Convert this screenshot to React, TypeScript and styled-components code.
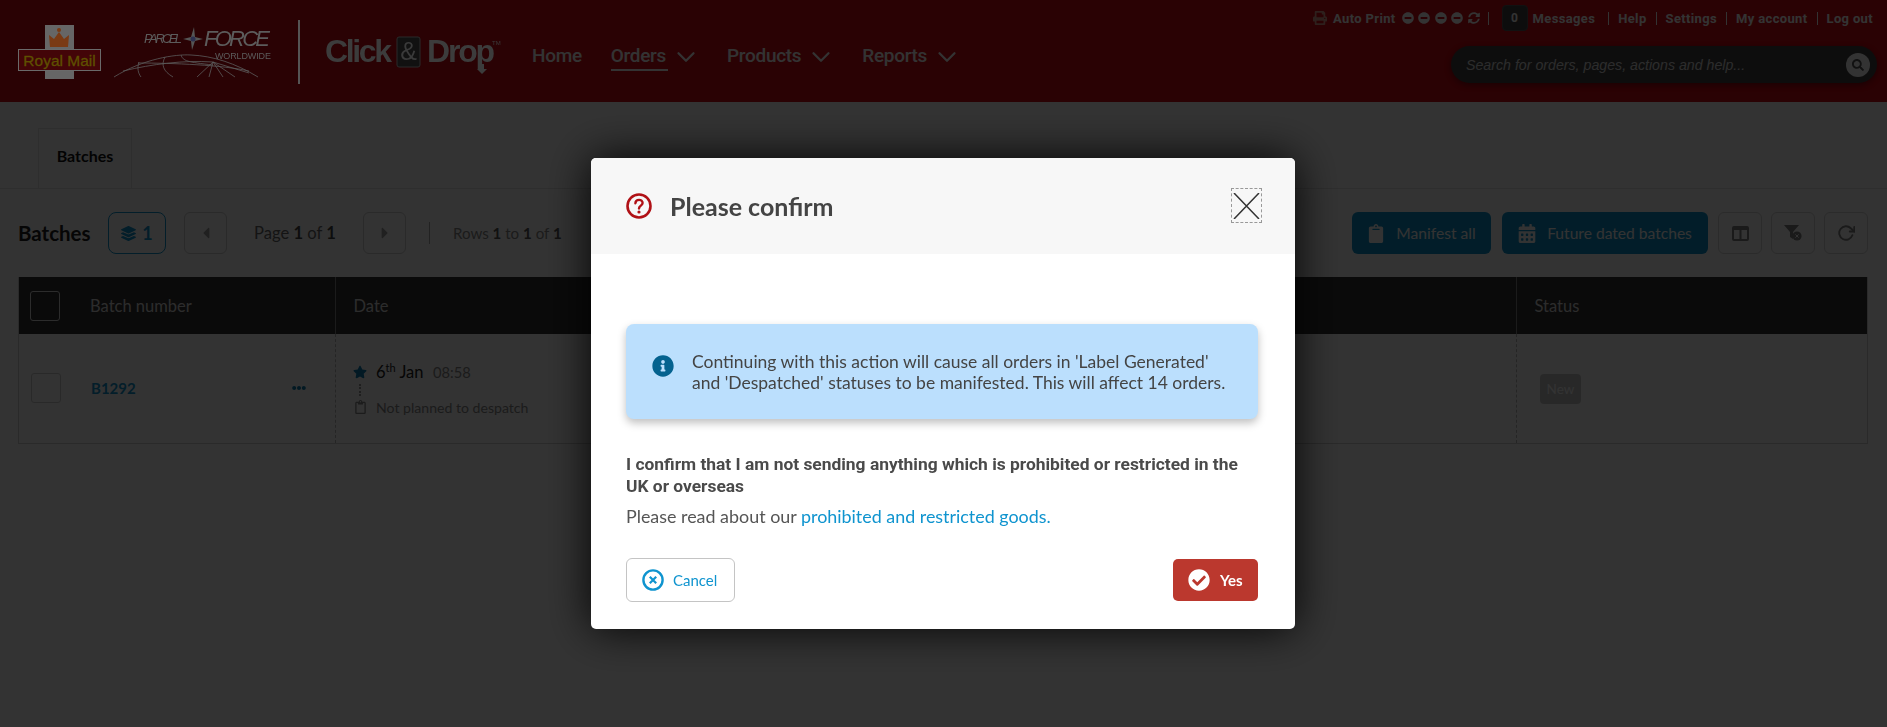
import styled, {createGlobalStyle} from 'styled-components'
import {
    FaPrint, FaMinusCircle, FaSyncAlt, FaSearch, FaLayerGroup, FaCaretLeft, FaCaretRight,
    FaClipboard, FaCalendarAlt, FaStar, FaRegClipboard, FaInfoCircle, FaCheckCircle, FaEllipsisH,
} from 'react-icons/fa'
import {FiChevronDown, FiRotateCw} from 'react-icons/fi'

const GlobalStyle = createGlobalStyle`
    html, body {
        margin: 0;
        padding: 0;
        background: #ffffff;
    }
    body {
        font-family: "Lato", "Noto Sans", sans-serif;
        color: #333333;
        height: 727px;
        overflow: hidden;
    }
`

function RoyalMailLogo() {
    return (
        <svg width="105" height="56" viewBox="0 0 105 56">
            <rect x="45" y="0" width="29" height="54" fill="#666666"/>
            <path d="M50 22 L49 10 L54 14 L59 7 L64 14 L69 10 L68 22 Z" fill="#7a3a14"/>
            <circle cx="59" cy="5" r="2" fill="#7a3a14"/>
            <rect x="18.5" y="24.5" width="82" height="21" fill="#430508" stroke="#6a6a6a"/>
            <text x="59.5" y="41" textAnchor="middle" fontFamily="Liberation Sans" fontSize="15.5" fill="#5f5000" stroke="#5f5000" strokeWidth="0.3">Royal Mail</text>
        </svg>
    )
}

function ParcelforceLogo() {
    return (
        <svg width="160" height="64" viewBox="0 0 160 64" fill="none" stroke="#5c5c5c" strokeWidth="0.8">
            <text x="31" y="18" fontFamily="Liberation Sans" fontStyle="italic" fontSize="13" fill="#5c5c5c" stroke="none" textLength="38">PARCEL</text>
            <path d="M70 14 L78 12 L81 2 L82 12 L90 14 L82 16 L79 25 L78 16 Z" fill="#555555" stroke="none"/>
            <circle cx="80" cy="14" r="2.5" fill="#2c3050" stroke="none"/>
            <text x="91" y="21" fontFamily="Liberation Sans" fontStyle="italic" fontSize="22" fill="#5c5c5c" stroke="none" textLength="66">FORCE</text>
            <text x="102" y="34" fontFamily="Liberation Sans" fontSize="9" fill="#5c5c5c" stroke="none" textLength="56">WORLDWIDE</text>
            <path d="M1 52 C30 34 62 29 78 30 C100 31 122 38 145 52"/>
            <path d="M25 38 C60 38 110 40 136 46"/>
            <path d="M10 46 C40 39 70 35 100 37"/>
            <path d="M26 37 C24 43 25 48 28 52"/>
            <path d="M52 32 C48 40 50 46 60 52"/>
            <path d="M68 30 C70 36 74 37 100 40"/>
            <path d="M100 37 L84 52 M100 37 L96 52 M100 37 L110 52 M100 37 L122 52 M100 37 L136 48"/>
        </svg>
    )
}

function ClickDropLogo() {
    return (
        <svg width="180" height="50" viewBox="0 0 180 50">
            <text x="0" y="34" fontFamily="Liberation Sans" fontWeight="700" fontSize="32" fill="#3c3c3c" textLength="67">Click</text>
            <rect x="72" y="9" width="23" height="30" rx="2" fill="#111111" stroke="#2a2a2a"/>
            <text x="83.5" y="32" textAnchor="middle" fontFamily="Liberation Sans" fontSize="25" fill="#3a3a3a">&amp;</text>
            <text x="102" y="34" fontFamily="Liberation Sans" fontWeight="700" fontSize="32" fill="#3c3c3c" textLength="68">Drop</text>
            <path d="M155 36 H159 V41 H162 L157 46 L152 41 H155 Z" fill="#3c3c3c"/>
            <text x="167" y="17" fontFamily="Liberation Sans" fontSize="6" fill="#3c3c3c">TM</text>
        </svg>
    )
}

function QuestionIcon() {
    return (
        <svg width="26" height="26" viewBox="0 0 26 26" fill="none">
            <circle cx="13" cy="13" r="11.5" stroke="#b01116" strokeWidth="2.6"/>
            <path d="M9.4 10.2 C9.6 5.8 16.6 5.8 16.6 10 C16.6 12.6 13 12.6 13 15.4" stroke="#b01116" strokeWidth="2.4" strokeLinecap="round"/>
            <circle cx="13" cy="19" r="1.6" fill="#b01116"/>
        </svg>
    )
}

function CancelIcon() {
    return (
        <svg width="22" height="22" viewBox="0 0 22 22" fill="none" stroke="#0f94cf">
            <circle cx="11" cy="11" r="9.6" strokeWidth="2.4"/>
            <path d="M7.8 7.8 L14.2 14.2 M14.2 7.8 L7.8 14.2" strokeWidth="2.2"/>
        </svg>
    )
}

function FilterClearIcon() {
    return (
        <svg width="18" height="16" viewBox="0 0 18 16">
            <path d="M0 0 H15 L9 7 V14 L6 12 V7 Z" fill="#808080"/>
            <circle cx="13" cy="11" r="4.6" fill="#808080"/>
            <path d="M11.4 9.4 L14.6 12.6 M14.6 9.4 L11.4 12.6" stroke="#ffffff" strokeWidth="1"/>
        </svg>
    )
}

function ColumnsIcon() {
    return (
        <svg width="17" height="15" viewBox="0 0 17 15">
            <path d="M2 0 H15 A2 2 0 0 1 17 2 V13 A2 2 0 0 1 15 15 H2 A2 2 0 0 1 0 13 V2 A2 2 0 0 1 2 0 Z M2 4 V13 H7.5 V4 Z M9.5 4 V13 H15 V4 Z" fill="#808080" fillRule="evenodd"/>
        </svg>
    )
}

function App() {
    return (
        <>
            <GlobalStyle/>
            <Header>
                <Brand>
                    <RoyalMailLogo/>
                    <ParcelforceLogo/>
                    <BrandDivider/>
                    <ClickDropLogo/>
                </Brand>

                <Nav>
                    <NavItem>Home</NavItem>
                    <NavItem $active>Orders<FiChevronDown/></NavItem>
                    <NavItem>Products<FiChevronDown/></NavItem>
                    <NavItem>Reports<FiChevronDown/></NavItem>
                </Nav>

                <HeaderRight>
                    <UtilityBar>
                        <AutoPrint>
                            <FaPrint/>
                            <span>Auto Print</span>
                            <AutoPrintIcons>
                                <FaMinusCircle/>
                                <FaMinusCircle/>
                                <FaMinusCircle/>
                                <FaMinusCircle/>
                                <FaSyncAlt/>
                            </AutoPrintIcons>
                        </AutoPrint>
                        <MessageCount>0</MessageCount>
                        <UtilityLink>Messages</UtilityLink>
                        <UtilityLink $divided>Help</UtilityLink>
                        <UtilityLink $divided>Settings</UtilityLink>
                        <UtilityLink $divided>My account</UtilityLink>
                        <UtilityLink $divided>Log out</UtilityLink>
                    </UtilityBar>
                    <SearchBox>
                        <SearchText>Search for orders, pages, actions and help...</SearchText>
                        <SearchButton><FaSearch/></SearchButton>
                    </SearchBox>
                </HeaderRight>
            </Header>

            <Tabs>
                <Tab>Batches</Tab>
            </Tabs>

            <Content>
                <Toolbar>
                    <ToolbarTitle>Batches</ToolbarTitle>
                    <CountBadge><FaLayerGroup/>1</CountBadge>
                    <PageButton><FaCaretLeft/></PageButton>
                    <PageInfo>Page <b>1</b> of <b>1</b></PageInfo>
                    <PageButton><FaCaretRight/></PageButton>
                    <RowsInfo>Rows <b>1</b> to <b>1</b> of <b>1</b></RowsInfo>

                    <ToolbarActions>
                        <ActionButton><FaClipboard/>Manifest all</ActionButton>
                        <ActionButton $wide><FaCalendarAlt/>Future dated batches</ActionButton>
                        <IconButton><ColumnsIcon/></IconButton>
                        <IconButton><FilterClearIcon/></IconButton>
                        <IconButton><FiRotateCw/></IconButton>
                    </ToolbarActions>
                </Toolbar>

                <Table>
                    <HeaderCell>
                        <HeaderCheck/>
                        Batch number
                    </HeaderCell>
                    <HeaderCell $divided>Date</HeaderCell>
                    <HeaderCell $divided>Status</HeaderCell>

                    <BatchCell>
                        <RowCheck/>
                        <BatchLink>B1292</BatchLink>
                        <RowMenu><FaEllipsisH/></RowMenu>
                    </BatchCell>
                    <DateCell>
                        <DateLine>
                            <StarIcon><FaStar/></StarIcon>
                            <DateText>6<sup>th</sup> Jan</DateText>
                            <TimeText>08:58</TimeText>
                        </DateLine>
                        <DotLine/>
                        <DateLine>
                            <PlanIcon><FaRegClipboard/></PlanIcon>
                            <PlanText>Not planned to despatch</PlanText>
                        </DateLine>
                    </DateCell>
                    <StatusCell>
                        <StatusTag>New</StatusTag>
                    </StatusCell>
                </Table>
            </Content>

            <Overlay/>

            <ModalWrap>
                <Modal>
                    <ModalHeader>
                        <QuestionIcon/>
                        <ModalTitle>Please confirm</ModalTitle>
                        <CloseButton>
                            <svg width="27" height="26" viewBox="0 0 27 26" fill="none" stroke="#333333" strokeWidth="1.5">
                                <path d="M1 0 L26 26 M26 0 L1 26"/>
                            </svg>
                        </CloseButton>
                    </ModalHeader>

                    <ModalBody>
                        <Alert>
                            <AlertIcon><FaInfoCircle/></AlertIcon>
                            <AlertText>
                                Continuing with this action will cause all orders in 'Label Generated'
                                <br/>
                                and 'Despatched' statuses to be manifested. This will affect 14 orders.
                            </AlertText>
                        </Alert>

                        <ConfirmText>
                            I confirm that I am not sending anything which is prohibited or restricted in the UK or overseas
                        </ConfirmText>
                        <ReadText>
                            Please read about our <GoodsLink>prohibited and restricted goods.</GoodsLink>
                        </ReadText>

                        <ModalActions>
                            <CancelButton><CancelIcon/>Cancel</CancelButton>
                            <YesButton><FaCheckCircle/>Yes</YesButton>
                        </ModalActions>
                    </ModalBody>
                </Modal>
            </ModalWrap>
        </>
    )
}

export default App

const Header = styled.header`
    height: 102px;
    background-color: #d20a14;
    display: flex;
    box-sizing: border-box;
`

const Brand = styled.div`
    position: relative;
    z-index: 12;
    display: flex;
    align-items: flex-start;
    width: 532px;
    flex: none;
    padding-top: 25px;
    box-sizing: border-box;

    & > svg {
        flex: none;
    }
    & > svg:nth-of-type(2) {
        margin-left: 8px;
    }
    & > svg:nth-of-type(3) {
        margin-left: 25px;
        margin-top: 3px;
    }
`

const BrandDivider = styled.div`
    width: 2px;
    height: 64px;
    margin-left: 25px;
    margin-top: -5px;
    background: #555555;
    flex: none;
`

const Nav = styled.nav`
    display: flex;
    gap: 26px;
    padding-top: 43px;
    font-family: "Roboto", sans-serif;
    font-size: 19px;
    font-weight: 500;
    letter-spacing: -0.3px;
    color: #ffffff;
`

const NavItem = styled.div<{$active?: boolean}>`
    position: relative;
    height: 27px;
    line-height: 26px;
    display: flex;
    gap: 5px;
    white-space: nowrap;

    &:first-child {
        margin-right: 3px;
    }

    ${props => props.$active && `
        &::after {
            content: "";
            position: absolute;
            left: 0;
            width: 57px;
            bottom: -1px;
            height: 2px;
            background: #ffffff;
        }
    `}

    svg {
        width: 30px;
        height: 30px;
        stroke-width: 1.8;
        margin-top: -1px;
    }
`

const HeaderRight = styled.div`
    margin-left: auto;
    padding-right: 10px;
    display: flex;
    flex-direction: column;
    align-items: flex-end;
`

const UtilityBar = styled.div`
    height: 46px;
    padding-top: 5px;
    padding-right: 4px;
    box-sizing: border-box;
    display: flex;
    font-family: "Roboto", sans-serif;
    font-size: 13px;
    font-weight: 700;
    letter-spacing: 0.35px;
    color: #ffffff;
    white-space: nowrap;
`

const AutoPrint = styled.div`
    height: 26px;
    display: flex;
    align-items: center;
    gap: 6px;
    padding-right: 9px;
    margin-right: 13px;
    position: relative;

    &::after {
        content: "";
        position: absolute;
        right: 0;
        top: 7px;
        height: 13px;
        width: 1px;
        background: #ffffff;
    }

    > svg {
        width: 14px;
        height: 14px;
        color: #e0a090;
    }
`

const AutoPrintIcons = styled.div`
    display: flex;
    align-items: center;
    gap: 4.5px;

    svg {
        width: 12px;
        height: 12px;
    }
`

const MessageCount = styled.div`
    width: 26px;
    height: 26px;
    box-sizing: border-box;
    border: 1px solid #555555;
    border-radius: 4px;
    background: #444444;
    font-size: 12px;
    line-height: 24px;
    text-align: center;
    margin-right: 5px;
`

const UtilityLink = styled.div<{$divided?: boolean}>`
    height: 26px;
    line-height: 28px;
    position: relative;
    margin-left: ${props => props.$divided ? '19px' : '0'};
    margin-right: ${props => props.$divided ? '0' : '4px'};

    ${props => props.$divided && `
        &::before {
            content: "";
            position: absolute;
            left: -10px;
            top: 7px;
            height: 13px;
            width: 1px;
            background: #ffffff;
        }
    `}
`

const SearchBox = styled.div`
    width: 426px;
    height: 37px;
    border-radius: 19px;
    background: #444444;
    box-shadow: 0 2px 6px rgba(0, 0, 0, 0.4);
    display: flex;
    align-items: center;
    padding: 0 7px 0 15px;
    box-sizing: border-box;
`

const SearchText = styled.div`
    font-family: "Liberation Sans", sans-serif;
    font-style: italic;
    font-size: 14.2px;
    color: #dddddd;
`

const SearchButton = styled.div`
    margin-left: auto;
    width: 24px;
    height: 24px;
    border-radius: 50%;
    background: #ffffff;
    color: #555555;
    display: grid;
    place-items: center;

    svg {
        width: 12px;
        height: 12px;
    }
`

const Tabs = styled.div`
    height: 87px;
    box-sizing: border-box;
    padding: 26px 0 0 38px;
    border-bottom: 1px solid #e4e4e4;
    display: flex;
`

const Tab = styled.div`
    width: 94px;
    height: 60px;
    box-sizing: border-box;
    border: 1px solid #e4e4e4;
    border-bottom: 0;
    font-size: 16px;
    font-weight: 700;
    color: #111111;
    text-align: center;
    line-height: 54px;
`

const Content = styled.main`
    padding: 23px 19px 0 18px;
`

const Toolbar = styled.div`
    height: 42px;
    display: flex;
    align-items: center;
`

const ToolbarTitle = styled.h2`
    margin: 0;
    width: 90px;
    flex: none;
    font-size: 20.5px;
    font-weight: 700;
    color: #222222;
`

const CountBadge = styled.div`
    width: 58px;
    height: 42px;
    box-sizing: border-box;
    border: 1px solid #0f94cf;
    border-radius: 8px;
    display: flex;
    align-items: center;
    justify-content: center;
    gap: 6px;
    font-size: 18px;
    font-weight: 700;
    color: #0f94cf;

    svg {
        width: 15px;
        height: 17px;
    }
`

const PageButton = styled.div`
    width: 43px;
    height: 42px;
    box-sizing: border-box;
    border: 1px solid #cfcfcf;
    border-radius: 6px;
    margin-left: 18px;
    display: grid;
    place-items: center;
    color: #a0a0a0;

    svg {
        width: 16px;
        height: 18px;
    }
`

const PageInfo = styled.div`
    width: 91px;
    margin-left: 27px;
    white-space: nowrap;
    font-size: 16.6px;
    color: #666666;

    b {
        color: #444444;
    }
`

const RowsInfo = styled.div`
    margin-left: 23px;
    padding-left: 23px;
    height: 22px;
    line-height: 22px;
    border-left: 1px solid #aaaaaa;
    font-size: 15.1px;
    color: #888888;

    b {
        color: #555555;
    }
`

const ToolbarActions = styled.div`
    margin-left: auto;
    display: flex;
    align-items: center;
`

const ActionButton = styled.div<{$wide?: boolean}>`
    width: ${props => props.$wide ? '206px' : '139px'};
    height: 42px;
    margin-right: ${props => props.$wide ? '1px' : '11px'};
    box-sizing: border-box;
    background: #0c92ca;
    border-radius: 6px;
    color: #ffffff;
    font-size: 15.6px;
    display: flex;
    align-items: center;
    justify-content: center;
    gap: 11px;
    white-space: nowrap;

    svg {
        width: 18px;
        height: 19px;
    }
`

const IconButton = styled.div`
    width: 44px;
    height: 42px;
    box-sizing: border-box;
    border: 1px solid #d4d4d4;
    border-radius: 6px;
    margin-left: 9px;
    display: grid;
    place-items: center;

    > svg {
        color: #808080;
    }

    &:last-child svg {
        width: 18px;
        height: 18px;
        stroke-width: 2.5;
    }
`

const Table = styled.div`
    margin-top: 23px;
    display: grid;
    grid-template-columns: 316px 1181px 1fr;
    grid-template-rows: 57px 109px;
    border-bottom: 1px solid #cfcfcf;
    border-left: 1px solid #cfcfcf;
    border-right: 1px solid #cfcfcf;
    box-sizing: border-box;
`

const HeaderCell = styled.div<{$divided?: boolean}>`
    background: #333333;
    color: #dddddd;
    font-size: 16.5px;
    display: flex;
    align-items: center;
    padding-left: ${props => props.$divided ? '17.5px' : '11px'};
    border-left: ${props => props.$divided ? '1px solid #888888' : '0'};
`

const HeaderCheck = styled.div`
    width: 30px;
    height: 30px;
    box-sizing: border-box;
    border: 1px solid #dddddd;
    border-radius: 3px;
    margin-right: 30px;
`

const BatchCell = styled.div`
    display: flex;
    align-items: center;
    padding: 0 29px 2px 12px;
`

const RowCheck = styled.div`
    width: 30px;
    height: 30px;
    box-sizing: border-box;
    border: 1px solid #cccccc;
    border-radius: 3px;
    margin-right: 30px;
`

const BatchLink = styled.div`
    font-size: 15px;
    font-weight: 700;
    color: #0f94cf;
`

const RowMenu = styled.div`
    margin-left: auto;
    color: #0f7fb0;
    display: flex;

    svg {
        width: 14px;
        height: 14px;
    }
`

const DateCell = styled.div`
    border-left: 1px dashed #bbbbbb;
    padding: 28px 0 0 17px;
`

const DateLine = styled.div`
    display: flex;
    align-items: center;
    height: 20px;
`

const StarIcon = styled.div`
    width: 14px;
    margin-right: 9px;
    display: flex;
    color: #0c7fb5;

    svg {
        width: 14px;
        height: 14px;
    }
`

const PlanIcon = styled.div`
    width: 14px;
    margin-right: 9px;
    display: flex;
    justify-content: center;
    color: #8a8a8a;

    svg {
        width: 11px;
        height: 14px;
    }
`

const DateText = styled.div`
    font-size: 16.5px;
    color: #222222;

    sup {
        font-size: 11px;
        line-height: 0;
    }
`

const TimeText = styled.div`
    margin-left: 9.5px;
    font-size: 14.7px;
    color: #888888;
`

const PlanText = styled.div`
    font-size: 14.1px;
    color: #888888;
`

const DotLine = styled.div`
    width: 0;
    height: 12px;
    margin: 2px 0 1px 6px;
    border-left: 2px dotted #999999;
`

const StatusCell = styled.div`
    border-left: 1px dashed #bbbbbb;
    padding: 40px 0 0 23px;
`

const StatusTag = styled.div`
    width: 41px;
    height: 30px;
    border-radius: 4px;
    background: #c8c8c8;
    color: #ffffff;
    font-size: 13.5px;
    line-height: 30px;
    text-align: center;
`

const Overlay = styled.div`
    position: fixed;
    inset: 0;
    z-index: 10;
    background: rgba(0, 0, 0, 0.8);
`

const ModalWrap = styled.div`
    position: fixed;
    inset: 0;
    z-index: 11;
    display: flex;
    justify-content: center;
    align-items: flex-start;
    padding-top: 158px;
`

const Modal = styled.div`
    width: 704px;
    height: 471px;
    margin-left: -1px;
    background: #ffffff;
    border-radius: 5px;
    overflow: hidden;
    box-shadow: 0 0 45px rgba(0, 0, 0, 0.95);
`

const ModalHeader = styled.div`
    height: 96px;
    background: #f7f7f7;
    display: flex;
    align-items: center;
    padding: 0 33px 0 35px;
`

const ModalTitle = styled.div`
    margin-left: 18px;
    font-size: 25px;
    font-weight: 700;
    color: #444444;
`

const CloseButton = styled.div`
    margin-left: auto;
    margin-top: -1px;
    width: 31px;
    height: 35px;
    box-sizing: border-box;
    border: 1px dashed #999999;
    display: grid;
    place-items: center;
`

const ModalBody = styled.div`
    padding: 70px 37px 0 35px;
`

const Alert = styled.div`
    height: 95px;
    box-sizing: border-box;
    background: #bbdffd;
    border-radius: 8px;
    box-shadow: 0 4px 8px rgba(0, 0, 0, 0.25);
    display: flex;
    align-items: center;
    padding-left: 26px;
`

const AlertIcon = styled.div`
    width: 22px;
    height: 22px;
    margin-top: -11px;
    color: #04628f;

    svg {
        width: 22px;
        height: 22px;
    }
`

const AlertText = styled.div`
    margin-left: 18px;
    font-size: 17.5px;
    line-height: 21px;
    color: #444444;
    white-space: nowrap;
`

const ConfirmText = styled.div`
    margin-top: 34px;
    font-family: "Roboto", sans-serif;
    font-size: 17.4px;
    font-weight: 700;
    line-height: 22px;
    color: #4a4a4a;
`

const ReadText = styled.div`
    margin-top: 8px;
    font-size: 17.9px;
    line-height: 22px;
    color: #555555;
`

const GoodsLink = styled.span`
    color: #0f94cf;
`

const ModalActions = styled.div`
    margin-top: 31px;
    display: flex;
    align-items: center;
    justify-content: space-between;
`

const CancelButton = styled.div`
    width: 109px;
    height: 44px;
    box-sizing: border-box;
    border: 1px solid #c4c4c4;
    border-radius: 6px;
    display: flex;
    align-items: center;
    gap: 9px;
    padding-left: 15px;
    font-size: 15px;
    color: #0f94cf;
`

const YesButton = styled.div`
    width: 85px;
    height: 42px;
    box-sizing: border-box;
    background: #bb382e;
    border-radius: 5px;
    display: flex;
    align-items: center;
    gap: 10px;
    padding-left: 15px;
    font-size: 15px;
    font-weight: 700;
    color: #ffffff;

    svg {
        width: 22px;
        height: 22px;
    }
`
